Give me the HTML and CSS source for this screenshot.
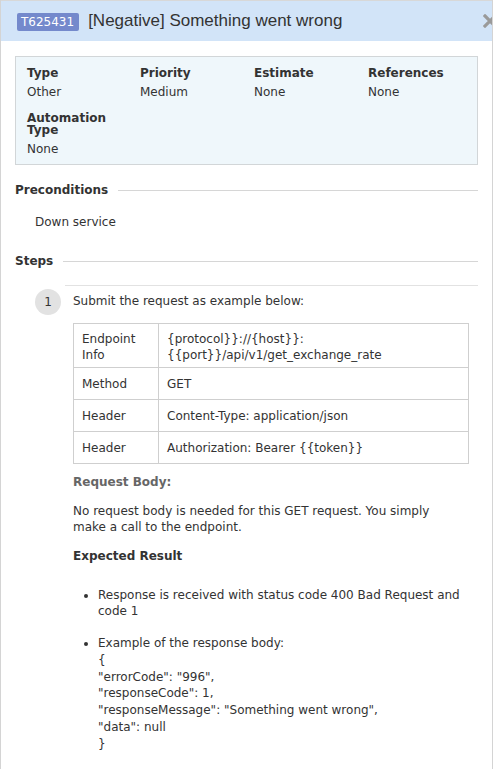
FILE: index.html
```html
<!DOCTYPE html>
<html>
<head>
<meta charset="utf-8">
<link rel="stylesheet" href="styles.css">
</head>
<body>
<div class="panel">
  <div class="header">
    <span class="badge">T625431</span>
    <span class="title">[Negative] Something went wrong</span>
    <span class="close">
      <svg width="14" height="14" viewBox="0 0 14 14"><path d="M2 2 L12 12 M12 2 L2 12" stroke="#9a9a9a" stroke-width="3.2" stroke-linecap="square"/></svg>
    </span>
  </div>
  <div class="content">
    <div class="info">
      <div class="field"><div class="label">Type</div><div class="value">Other</div></div>
      <div class="field"><div class="label">Priority</div><div class="value">Medium</div></div>
      <div class="field"><div class="label">Estimate</div><div class="value">None</div></div>
      <div class="field"><div class="label">References</div><div class="value">None</div></div>
      <div class="field"><div class="label">Automation Type</div><div class="value">None</div></div>
    </div>

    <div class="section-head"><span>Preconditions</span><span class="rule"></span></div>
    <div class="pre">Down service</div>

    <div class="section-head steps-head"><span>Steps</span><span class="rule"></span></div>

    <div class="step">
      <div class="num">1</div>
      <div class="step-body">
        <p class="step-title">Submit the request as example below:</p>
        <table class="req">
          <tr class="first"><td class="k">Endpoint Info</td><td>{protocol}}://{host}}:<br>{{port}}/api/v1/get_exchange_rate</td></tr>
          <tr><td class="k">Method</td><td>GET</td></tr>
          <tr><td class="k">Header</td><td>Content-Type: application/json</td></tr>
          <tr><td class="k">Header</td><td>Authorization: Bearer {{token}}</td></tr>
        </table>
        <div class="sub">Request Body:</div>
        <p class="para">No request body is needed for this GET request. You simply make a call to the endpoint.</p>
        <div class="expected">Expected Result</div>
        <ul class="results">
          <li>Response is received with status code 400 Bad Request and code 1</li>
          <li class="json">Example of the response body:<br>{<br>"errorCode": "996",<br>"responseCode": 1,<br>"responseMessage": "Something went wrong",<br>"data": null<br>}</li>
        </ul>
      </div>
    </div>
  </div>
</div>
</body>
</html>
```
FILE: styles.css
```css
* { box-sizing: border-box; }
html, body { margin: 0; padding: 0; background: #fff; }
body { font-family: "DejaVu Sans", Verdana, sans-serif; font-size: 12px; color: #333; line-height: 16px; }

.panel {
  width: 493px;
  min-height: 769px;
  border-left: 1px solid #d4d4d4;
  border-right: 1px solid #d4d4d4;
  overflow: hidden;
}

.header {
  height: 41px;
  background: #d2e4f8;
  border-top: 1px solid #d8d8d8;
  display: flex;
  align-items: center;
  padding-left: 16px;
  position: relative;
}
.badge {
  background: #7489cc;
  color: #fff;
  font-size: 12px;
  line-height: 18px;
  height: 18px;
  padding: 0 5px 0 4px;
  border-radius: 2px;
  margin-top: 2px;
}
.title {
  font-family: "Liberation Sans", Arial, sans-serif;
  font-size: 17px;
  color: #333;
  margin-left: 9px;
}
.close {
  position: absolute;
  right: -5px;
  top: 13px;
  width: 14px;
  height: 14px;
}

.content { padding: 15px 14px 0 14px; }

.info {
  background: #eff7fb;
  border: 1px solid #d2d6d8;
  padding: 9px 10px 7px 11px;
  display: grid;
  grid-template-columns: 113px 114px 114px 114px;
  row-gap: 11px;
}
.label { font-weight: bold; line-height: 12px; margin-top: 1px; margin-bottom: 5px; }
.field:nth-child(5) .label { width: 90px; }
.value { line-height: 16px; }

.section-head {
  display: flex;
  align-items: center;
  font-weight: bold;
  margin-top: 17px;
  height: 16px;
}
.section-head .rule {
  flex: 1;
  height: 1px;
  background: #d6d6d6;
  margin-left: 10px;
}
.pre { padding-left: 20px; margin-top: 16px; }
.steps-head { margin-top: 23px; }

.step {
  display: flex;
  margin-top: 16px;
  padding-left: 20px;
}
.num {
  width: 26px;
  height: 26px;
  border-radius: 50%;
  background: #e2e2e2;
  text-align: center;
  line-height: 26px;
  margin-top: 4px;
  flex: none;
}
.step-body {
  flex: 1;
  margin-left: 4px;
  border-top: 1px solid #e2e2e2;
  padding-left: 8px;
  padding-top: 7px;
}
.step-title { margin: 0; }
.req {
  border-collapse: collapse;
  margin-top: 14px;
  width: 396px;
}
.req td {
  border: 1px solid #cfcfcf;
  padding: 8px 8px 7px 8px;
  vertical-align: top;
}
.req tr.first td { padding-top: 7px; padding-bottom: 4px; }
.req td.k { width: 85px; }
.sub { font-weight: bold; color: #666; margin-top: 10px; }
.para { margin: 13px 0 0 0; max-width: 380px; }
.expected { font-weight: bold; margin-top: 13px; }
.results { margin: 23px 0 0 0; padding-left: 25px; }
.results li { margin-bottom: 16px; }
.results li.json { line-height: 16.8px; }
```
